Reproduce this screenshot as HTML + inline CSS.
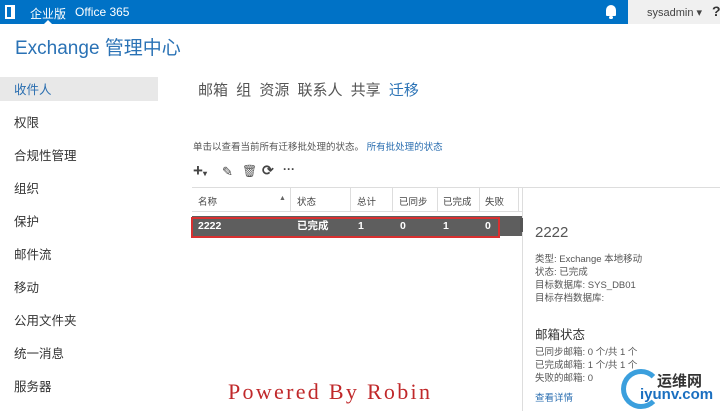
<!DOCTYPE html>
<html><head><meta charset="utf-8"><style>
*{margin:0;padding:0;box-sizing:border-box}
body{width:720px;height:411px;overflow:hidden;background:#fff;font-family:"Liberation Sans","Noto Sans CJK SC",sans-serif;color:#333;position:relative}
.a{position:absolute;white-space:nowrap}
.top{position:absolute;left:0;top:0;width:720px;height:24px;background:#0072c6}
.side div{position:absolute;left:14px;font-size:12.5px;color:#333;line-height:16px}
.r{position:absolute;top:219px;font-size:10.5px;line-height:14px;color:#fff;font-weight:bold}
</style></head><body>
<div class="top"></div>
<div class="a" style="left:5px;top:5px;width:10px;height:14px;border:2px solid #fff;border-right-width:4px;"></div>
<div class="a" style="left:30px;top:5px;color:#fff;font-size:12px">企业版</div>
<div class="a" style="left:44px;top:20px;width:0;height:0;border-left:4px solid transparent;border-right:4px solid transparent;border-bottom:4px solid #fff"></div>
<div class="a" style="left:75px;top:5px;color:#fff;font-size:12px">Office 365</div>
<div class="a" style="left:606px;top:5px;width:10px;height:11px;background:#fff;border-radius:5px 5px 1px 1px"></div>
<div class="a" style="left:609px;top:16px;width:4px;height:3px;background:#fff;border-radius:2px"></div>
<div class="a" style="left:628px;top:0;width:92px;height:24px;background:#f0f0f0"></div>
<div class="a" style="left:647px;top:6px;font-size:11px;color:#444">sysadmin ▾</div>
<div class="a" style="left:712px;top:3px;font-size:14px;font-weight:bold;color:#333">?</div>
<div class="a" style="left:15px;top:37px;font-size:19px;line-height:24px;color:#2a72b5">Exchange 管理中心</div>
<div class="a" style="left:0;top:77px;width:158px;height:24px;background:#e8e8e8"></div>
<div class="side">
<div style="top:82px;color:#2a6eb0">收件人</div>
<div style="top:115px">权限</div>
<div style="top:148px">合规性管理</div>
<div style="top:181px">组织</div>
<div style="top:214px">保护</div>
<div style="top:247px">邮件流</div>
<div style="top:280px">移动</div>
<div style="top:313px">公用文件夹</div>
<div style="top:346px">统一消息</div>
<div style="top:379px">服务器</div>
</div>
<div class="a" style="left:198px;top:79px;font-size:15px;color:#555;word-spacing:4px">邮箱 组 资源 联系人 共享 <span style="color:#2a72b5">迁移</span></div>
<div class="a" style="left:193px;top:139px;font-size:9.5px;color:#555">单击以查看当前所有迁移批处理的状态。 <span style="color:#2a6eb0">所有批处理的状态</span></div>
<div class="a" style="left:193px;top:161px;font-size:17px;color:#444;font-weight:bold">+<span style="font-size:8px">▾</span></div>
<div class="a" style="left:222px;top:164px;font-size:13px;color:#444">✎</div>
<div class="a" style="left:242px;top:164px;font-size:12px;color:#555">🗑</div>
<div class="a" style="left:262px;top:162px;font-size:14px;color:#444;font-weight:bold">⟳</div>
<div class="a" style="left:283px;top:162px;font-size:12px;color:#444;font-weight:bold">···</div>
<div class="a" style="left:192px;top:187px;width:528px;height:1px;background:#ddd"></div>
<div class="a" style="left:192px;top:211px;width:330px;height:1px;background:#ddd"></div>
<div class="a" style="left:522px;top:187px;width:1px;height:224px;background:#ddd"></div>
<div class="a" style="left:290px;top:188px;width:1px;height:23px;background:#ddd"></div>
<div class="a" style="left:350px;top:188px;width:1px;height:23px;background:#ddd"></div>
<div class="a" style="left:392px;top:188px;width:1px;height:23px;background:#ddd"></div>
<div class="a" style="left:437px;top:188px;width:1px;height:23px;background:#ddd"></div>
<div class="a" style="left:479px;top:188px;width:1px;height:23px;background:#ddd"></div>
<div class="a" style="left:518px;top:188px;width:1px;height:23px;background:#ddd"></div>
<div class="a" style="top:194px;left:198px;font-size:9.5px;color:#444">名称</div>
<div class="a" style="top:195px;left:279px;font-size:7px;color:#666">▲</div>
<div class="a" style="top:194px;left:297px;font-size:9.5px;color:#444">状态</div>
<div class="a" style="top:194px;left:357px;font-size:9.5px;color:#444">总计</div>
<div class="a" style="top:194px;left:399px;font-size:9.5px;color:#444">已同步</div>
<div class="a" style="top:194px;left:443px;font-size:9.5px;color:#444">已完成</div>
<div class="a" style="top:194px;left:485px;font-size:9.5px;color:#444">失败</div>
<div class="a" style="left:192px;top:216px;width:330px;height:20px;background:#5e5e5e"></div>
<div class="a" style="left:191px;top:217px;width:309px;height:21px;border:2px solid #d83030"></div>
<div class="r" style="left:198px">2222</div>
<div class="r" style="left:297px">已完成</div>
<div class="r" style="left:358px">1</div>
<div class="r" style="left:400px">0</div>
<div class="r" style="left:443px">1</div>
<div class="r" style="left:485px">0</div>
<div class="a" style="left:520px;top:218px;width:3px;height:14px;background:#555"></div>
<div class="a" style="left:535px;top:224px;font-size:15px;color:#555">2222</div>
<div class="a" style="left:535px;top:253px;font-size:9.5px;color:#555;line-height:13px">类型: Exchange 本地移动<br>状态: 已完成<br>目标数据库: SYS_DB01<br>目标存档数据库:</div>
<div class="a" style="left:535px;top:324px;font-size:12.5px;color:#333">邮箱状态</div>
<div class="a" style="left:535px;top:346px;font-size:9.5px;color:#555;line-height:13px">已同步邮箱: 0 个/共 1 个<br>已完成邮箱: 1 个/共 1 个<br>失败的邮箱: 0</div>
<div class="a" style="left:535px;top:390px;font-size:9.5px;color:#2a6eb0">查看详情</div>
<div class="a" style="left:621px;top:369px;width:40px;height:40px;border:5px solid #1a8fd8;border-right-color:transparent;border-radius:50%;opacity:.85"></div>
<div class="a" style="left:657px;top:370px;font-size:15px;font-weight:bold;color:#333">运维网</div>
<div class="a" style="left:640px;top:386px;font-size:15px;font-weight:bold;color:#1a6fc0">iyunv.com</div>
<div class="a" style="left:228px;top:379px;font-size:22px;color:#c0282a;font-family:'Liberation Serif',serif;letter-spacing:2.3px">Powered By Robin</div>
</body></html>
